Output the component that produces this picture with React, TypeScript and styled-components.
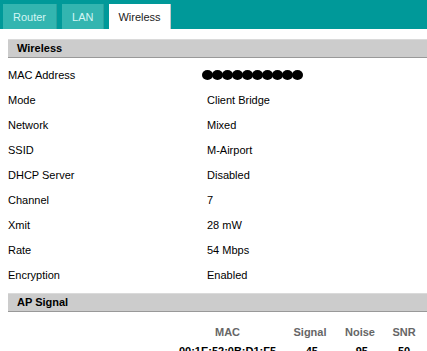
import React, { FC } from 'react'
import styled, { createGlobalStyle } from 'styled-components'

interface Setting {
  label: string
  value: string
}

const settings: Setting[] = [
  { label: 'MAC Address', value: '' },
  { label: 'Mode', value: 'Client Bridge' },
  { label: 'Network', value: 'Mixed' },
  { label: 'SSID', value: 'M-Airport' },
  { label: 'DHCP Server', value: 'Disabled' },
  { label: 'Channel', value: '7' },
  { label: 'Xmit', value: '28 mW' },
  { label: 'Rate', value: '54 Mbps' },
  { label: 'Encryption', value: 'Enabled' },
]

const tabs = ['Router', 'LAN', 'Wireless']

const App: FC = () => {
  return (
    <>
      <GlobalStyle />
      <TabBar>
        {tabs.map((t) => (
          <Tab key={t} $active={t === 'Wireless'}>
            {t}
          </Tab>
        ))}
      </TabBar>
      <Content>
        <SectionHeader>Wireless</SectionHeader>
        <Settings>
          {settings.map((s) => (
            <Row key={s.label}>
              <Label>{s.label}</Label>
              {s.label === 'MAC Address' ? (
                <Masked>
                  {Array.from({ length: 10 }).map((_, i) => (
                    <Dot key={i} />
                  ))}
                </Masked>
              ) : (
                <Value>{s.value}</Value>
              )}
            </Row>
          ))}
        </Settings>
        <SectionHeader>AP Signal</SectionHeader>
        <SignalTable>
          <HeadCell>MAC</HeadCell>
          <HeadCell>Signal</HeadCell>
          <HeadCell>Noise</HeadCell>
          <HeadCell>SNR</HeadCell>
          <DataCell>00:1E:52:0B:D1:F5</DataCell>
          <DataCell>-45</DataCell>
          <DataCell>-95</DataCell>
          <DataCell>50</DataCell>
        </SignalTable>
      </Content>
    </>
  )
}

const GlobalStyle = createGlobalStyle`
  body {
    margin: 0;
    background: #fff;
    font-family: "Liberation Sans", Arial, sans-serif;
    font-size: 11px;
    color: #000;
    overflow: hidden;
  }
`
const TabBar = styled.div`
  display: flex;
  gap: 5px;
  height: 29px;
  padding: 4px 0 0 3px;
  box-sizing: border-box;
  background: #009999;
`
const Tab = styled.div<{ $active?: boolean }>`
  display: flex;
  align-items: center;
  padding: 0 ${(p) => (p.$active ? '9px' : '10px')};
  height: 25px;
  box-sizing: border-box;
  background: ${(p) => (p.$active ? '#fff' : '#33b5b0')};
  color: ${(p) => (p.$active ? '#222' : '#d4f6f4')};
  border-right: 1px solid ${(p) => (p.$active ? '#c8c8c8' : '#2ba39e')};
`
const Content = styled.div`
  padding: 10px 0 0 8px;
`
const SectionHeader = styled.div`
  height: 19px;
  line-height: 17px;
  padding-left: 9px;
  background: #cccccc;
  border-top: 1px solid #dadada;
  border-bottom: 1px solid #999;
  box-sizing: border-box;
  font-weight: bold;
  font-size: 11px;
  color: #000;
`
const Settings = styled.div`
  display: flex;
  flex-direction: column;
  margin: 4px 0 6px;
`
const Row = styled.div`
  display: flex;
  align-items: center;
  height: 25px;
`
const Label = styled.div`
  width: 199px;
  flex-shrink: 0;
`
const Value = styled.div``
const Masked = styled.div`
  display: flex;
  margin-left: -5px;
  padding-top: 1px;
`
const Dot = styled.span`
  width: 11px;
  height: 10px;
  margin-right: -1px;
  border-radius: 50%;
  background: #000;
`
const SignalTable = styled.div`
  display: grid;
  grid-template-columns: 99px 66px 34px 54px;
  grid-auto-rows: 19px;
  align-items: center;
  margin: 10px 0 0 170px;
`
const HeadCell = styled.div`
  text-align: center;
  font-weight: bold;
  color: #666;
`
const DataCell = styled.div`
  text-align: center;
  font-weight: bold;
`

export default App
